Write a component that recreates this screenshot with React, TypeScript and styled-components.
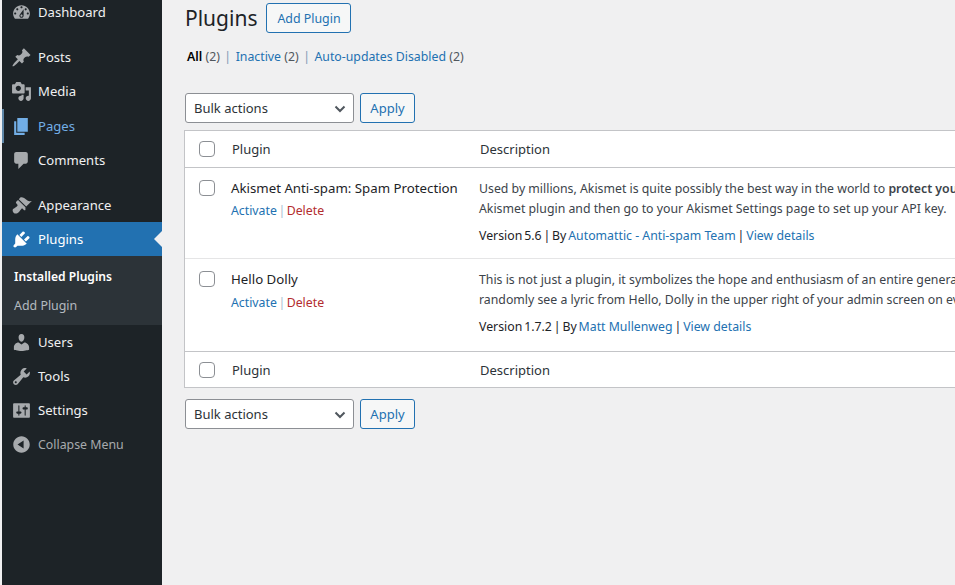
import React from "react";
import styled, { createGlobalStyle } from "styled-components";

const ICONS: Record<string, string> = {
  dashboard:
    "M3.76 16h12.48c1.1-1.37 1.76-3.11 1.76-5 0-4.42-3.58-8-8-8s-8 3.58-8 8c0 1.89.66 3.63 1.76 5zM10 4c.55 0 1 .45 1 1s-.45 1-1 1-1-.45-1-1 .45-1 1-1zM6 6c.55 0 1 .45 1 1s-.45 1-1 1-1-.45-1-1 .45-1 1-1zm8 0c.55 0 1 .45 1 1s-.45 1-1 1-1-.45-1-1 .45-1 1-1zm-5.37 5.55L12 7v6c0 1.1-.9 2-2 2s-2-.9-2-2c0-.57.24-1.08.63-1.45zM4 10c.55 0 1 .45 1 1s-.45 1-1 1-1-.45-1-1 .45-1 1-1zm12 0c.55 0 1 .45 1 1s-.45 1-1 1-1-.45-1-1 .45-1 1-1zm-5 3c0-.55-.45-1-1-1s-1 .45-1 1 .45 1 1 1 1-.45 1-1z",
  posts:
    "M10.44 3.02l1.82-1.82 6.36 6.35-1.83 1.82c-1.05-.68-2.48-.57-3.41.36l-.75.75c-.92.93-1.04 2.35-.35 3.41l-1.83 1.82-2.41-2.41-2.8 2.79c-.42.42-3.38 2.71-3.8 2.29s1.86-3.39 2.28-3.81l2.79-2.79L4.1 9.36l1.83-1.82c1.05.69 2.48.57 3.4-.36l.75-.75c.93-.92 1.05-2.35.36-3.41z",
  media:
    "M13 11V4c0-.55-.45-1-1-1h-1.67L9 1H5L3.67 3H2c-.55 0-1 .45-1 1v7c0 .55.45 1 1 1h10c.55 0 1-.45 1-1zM7 4.5c1.38 0 2.5 1.12 2.5 2.5S8.38 9.5 7 9.5 4.5 8.38 4.5 7 5.62 4.5 7 4.5zM14 6h5v10.5c0 1.38-1.12 2.5-2.5 2.5S14 17.88 14 16.5s1.12-2.5 2.5-2.5c.17 0 .34.02.5.05V9h-3V6zm-4 8.05V13h2v3.5c0 1.38-1.12 2.5-2.5 2.5S7 17.88 7 16.5 8.12 14 9.5 14c.17 0 .34.02.5.05z",
  pages: "M6 15V2h10v13H6zm-1 1h8v2H3V5h2v11z",
  comments:
    "M5 2h9c1.1 0 2 .9 2 2v7c0 1.1-.9 2-2 2h-2l-5 5v-5H5c-1.1 0-2-.9-2-2V4c0-1.1.9-2 2-2z",
  appearance:
    "M14.48 11.06L7.41 3.99l1.5-1.5c.5-.56 2.3-.47 3.51.32 1.21.8 1.43 1.28 2.91 2.1 1.18.64 2.45 1.26 4.45.85zm-.71.71L6.7 4.7 4.93 6.47c-.39.39-.39 1.02 0 1.41l1.06 1.06c.39.39.39 1.03 0 1.42-.6.6-1.43 1.11-2.21 1.69-.35.26-.7.53-1.01.84C1.43 13.25 1 15.35 2.44 16.79s3.54 1 4.89-.34c.31-.31.58-.66.84-1.01.58-.78 1.09-1.61 1.69-2.21.39-.39 1.03-.39 1.42 0l1.06 1.06c.39.39 1.02.39 1.41 0z",
  plugins:
    "M13.11 4.36L9.87 7.6 8 5.73l3.24-3.24c.35-.34 1.05-.2 1.56.32.52.51.66 1.21.31 1.55zm-8 1.77l.91-1.12 9.01 9.01-1.19.84c-.71.71-2.63 1.16-3.82 1.16H6.14L4.9 17.26c-.59.59-1.54.59-2.12 0-.59-.58-.59-1.53 0-2.12l1.24-1.24v-3.88c0-1.13.4-3.19 1.09-3.89zm7.26 3.97l3.24-3.24c.34-.35 1.04-.21 1.55.31.52.51.66 1.21.31 1.55l-3.24 3.25z",
  users:
    "M10 9.25c-2.27 0-2.73-3.44-2.73-3.44C7 4.02 7.82 2 9.97 2c2.16 0 2.98 2.02 2.71 3.81 0 0-.41 3.44-2.68 3.44zm0 2.57L12.72 10c2.39 0 4.52 2.33 4.52 4.53v2.49s-3.65 1.13-7.24 1.13c-3.65 0-7.24-1.13-7.24-1.13v-2.49c0-2.25 1.94-4.48 4.47-4.48z",
  tools:
    "M16.68 9.77c-1.34 1.34-3.3 1.67-4.95.99l-5.41 6.52c-.99.99-2.59.99-3.58 0s-.99-2.59 0-3.57l6.52-5.42c-.68-1.65-.35-3.61.99-4.95 1.28-1.28 3.12-1.62 4.72-1.06l-2.89 2.89 2.82 2.82 2.86-2.87c.53 1.58.18 3.39-1.08 4.65zM3.81 16.21c.4.39 1.04.39 1.43 0 .4-.4.4-1.04 0-1.43-.39-.4-1.03-.4-1.43 0-.39.39-.39 1.03 0 1.43z",
  settings:
    "M18 16V4c0-.55-.45-1-1-1H3c-.55 0-1 .45-1 1v12c0 .55.45 1 1 1h14c.55 0 1-.45 1-1zM8 11h1c.55 0 1 .45 1 1s-.45 1-1 1H8v1.5c0 .28-.22.5-.5.5s-.5-.22-.5-.5V13H6c-.55 0-1-.45-1-1s.45-1 1-1h1V5.5c0-.28.22-.5.5-.5s.5.22.5.5V11zm5-2h-1c-.55 0-1-.45-1-1s.45-1 1-1h1V5.5c0-.28.22-.5.5-.5s.5.22.5.5V7h1c.55 0 1 .45 1 1s-.45 1-1 1h-1v5.5c0 .28-.22.5-.5.5s-.5-.22-.5-.5V9z",
  collapse:
    "M10 2.16c4.33 0 7.84 3.51 7.84 7.84s-3.51 7.84-7.84 7.84S2.16 14.33 2.16 10 5.71 2.16 10 2.16zm2 11.72V6.12L6.18 9.97z"
};

const MENU = [
  { id: "dashboard", label: "Dashboard" },
  { id: "posts", label: "Posts", gap: true },
  { id: "media", label: "Media" },
  { id: "pages", label: "Pages", hover: true },
  { id: "comments", label: "Comments" },
  { id: "appearance", label: "Appearance", gap: true },
  { id: "plugins", label: "Plugins", current: true },
  { id: "users", label: "Users" },
  { id: "tools", label: "Tools" },
  { id: "settings", label: "Settings" },
  { id: "collapse", label: "Collapse Menu", muted: true }
];

const PLUGINS = [
  {
    name: "Akismet Anti-spam: Spam Protection",
    first: (
      <>
        Used by millions, Akismet is quite possibly the best way in the world to{" "}
        <strong>protect your blog from spam</strong>. Akismet Anti-spam keeps your
        site protected even while you sleep. To get started: activate the
      </>
    ),
    second:
      "Akismet plugin and then go to your Akismet Settings page to set up your API key.",
    version: "5.6",
    author: "Automattic - Anti-spam Team"
  },
  {
    name: "Hello Dolly",
    first:
      "This is not just a plugin, it symbolizes the hope and enthusiasm of an entire generation summed up in two words sung most famously by Louis Armstrong: Hello, Dolly. When activated you will",
    second:
      "randomly see a lyric from Hello, Dolly in the upper right of your admin screen on every page.",
    version: "1.7.2",
    author: "Matt Mullenweg"
  }
];

function MenuIcon({ id }: { id: string }) {
  return (
    <IconSlot viewBox="0 0 20 20" aria-hidden="true">
      <path d={ICONS[id]} />
    </IconSlot>
  );
}

function BulkBar() {
  return (
    <BulkRow>
      <SelectWrap>
        <BulkSelect defaultValue="">
          <option value="">Bulk actions</option>
          <option value="activate">Activate</option>
          <option value="delete">Delete</option>
        </BulkSelect>
        <Chevron viewBox="0 0 16 16" aria-hidden="true">
          <polyline points="3.5,5.5 8,10 12.5,5.5" />
        </Chevron>
      </SelectWrap>
      <ApplyButton type="button">Apply</ApplyButton>
    </BulkRow>
  );
}

function App() {
  return (
    <>
      <GlobalStyle />
      <Page>
        <Sidebar>
          {MENU.map(item => (
            <React.Fragment key={item.id}>
              <MenuItem
                $gap={item.gap}
                $hover={item.hover}
                $current={item.current}
                $muted={item.muted}
              >
                <MenuIcon id={item.id} />
                {item.label}
                {item.current && <CurrentArrow />}
              </MenuItem>
              {item.current && (
                <SubMenu>
                  <SubItem $active>Installed Plugins</SubItem>
                  <SubItem>Add Plugin</SubItem>
                </SubMenu>
              )}
            </React.Fragment>
          ))}
        </Sidebar>
        <Content>
          <TitleRow>
            <Title>Plugins</Title>
            <AddButton type="button">Add Plugin</AddButton>
          </TitleRow>
          <Filters>
            <FilterCurrent>All</FilterCurrent> <Count>(2)</Count>
            <Pipe>|</Pipe>
            <Link>Inactive</Link> <Count>(2)</Count>
            <Pipe>|</Pipe>
            <Link>Auto-updates Disabled</Link> <Count>(2)</Count>
          </Filters>
          <BulkBar />
          <PluginTable>
            <colgroup>
              <col width="37" />
              <col width="248" />
              <col />
            </colgroup>
            <thead>
              <tr>
                <CheckHead>
                  <Checkbox type="checkbox" />
                </CheckHead>
                <HeadCell>Plugin</HeadCell>
                <HeadCell>Description</HeadCell>
              </tr>
            </thead>
            <tbody>
              {PLUGINS.map(plugin => (
                <PluginRow key={plugin.name}>
                  <CheckCell>
                    <Checkbox type="checkbox" />
                  </CheckCell>
                  <NameCell>
                    <PluginName>{plugin.name}</PluginName>
                    <RowActions>
                      <Link>Activate</Link>
                      <ActionPipe>|</ActionPipe>
                      <DeleteLink>Delete</DeleteLink>
                    </RowActions>
                  </NameCell>
                  <DescCell>
                    <DescLine>{plugin.first}</DescLine>
                    <DescLine>{plugin.second}</DescLine>
                    <VersionLine>
                      Version {plugin.version} | By <Link>{plugin.author}</Link> |{" "}
                      <Link>View details</Link>
                    </VersionLine>
                  </DescCell>
                </PluginRow>
              ))}
            </tbody>
            <tfoot>
              <tr>
                <CheckFoot>
                  <Checkbox type="checkbox" />
                </CheckFoot>
                <FootCell>Plugin</FootCell>
                <FootCell>Description</FootCell>
              </tr>
            </tfoot>
          </PluginTable>
          <BulkBar />
        </Content>
      </Page>
    </>
  );
}

const GlobalStyle = createGlobalStyle`
  html, body {
    margin: 0;
    height: 100%;
    overflow: hidden;
    background: #f0f0f1;
  }
  body {
    font-family: "Noto Sans", "Open Sans", sans-serif;
    font-size: 13px;
    color: #3c434a;
  }
`;

const Page = styled.div`
  display: flex;
  width: 955px;
  height: 585px;
  overflow: hidden;
`;

const Sidebar = styled.nav`
  flex: none;
  width: 160px;
  margin-left: 2px;
  background: #1d2327;
  /* page is scrolled a few px, the first row is cut by the window top */
  & > :first-child {
    margin-top: -5px;
  }
`;

const MenuItem = styled.div<{
  $gap?: boolean;
  $hover?: boolean;
  $current?: boolean;
  $muted?: boolean;
}>`
  position: relative;
  display: flex;
  align-items: center;
  box-sizing: border-box;
  height: 34px;
  margin-top: ${p => (p.$gap ? "11px" : p.$hover ? "1px" : "0")};
  padding-left: ${p => (p.$hover ? "6.5px" : "8.5px")};
  border-left: ${p => (p.$hover ? "2px solid #5f87a8" : "none")};
  background: ${p => (p.$current ? "#2271b1" : "transparent")};
  color: ${p =>
    p.$hover
      ? "#72aee6"
      : p.$current
        ? "#fff"
        : p.$muted
          ? "#a7aaad"
          : "#f0f0f1"};
  fill: ${p =>
    p.$hover
      ? "#72aee6"
      : p.$current
        ? "#fff"
        : "#a7aaad"};
  font-size: ${p => (p.$muted ? "12.35px" : "13.1px")};
  white-space: nowrap;
`;

const IconSlot = styled.svg`
  flex: none;
  width: 21px;
  height: 21px;
  margin-right: 6.5px;
`;

const CurrentArrow = styled.span`
  position: absolute;
  right: 0;
  top: 50%;
  margin-top: -8px;
  border: 8px solid transparent;
  border-right-color: #f0f0f1;
  border-left-width: 0;
`;

const SubMenu = styled.div`
  padding: 6px 0 5px;
  background: #2c3338;
`;

const SubItem = styled.div<{ $active?: boolean }>`
  display: flex;
  align-items: center;
  height: 29px;
  padding-left: 12px;
  font-size: ${p => (p.$active ? "12.1px" : "12.4px")};
  font-weight: ${p => (p.$active ? 600 : 400)};
  color: ${p => (p.$active ? "#fff" : "rgba(240, 246, 252, 0.7)")};
`;

const Content = styled.main`
  flex: none;
  width: 793px;
  padding: 3px 0 0 23px;
  box-sizing: border-box;
`;

const TitleRow = styled.div`
  display: flex;
  align-items: center;
  gap: 9px;
  height: 30px;
`;

const Title = styled.h1`
  margin: 0;
  font-size: 21px;
  font-weight: 400;
  line-height: 30px;
  color: #1d2327;
`;

const OutlineButton = styled.button`
  box-sizing: border-box;
  height: 30px;
  padding: 0;
  border: 1px solid #2271b1;
  border-radius: 3px;
  background: #f6f7f7;
  color: #2271b1;
  font: inherit;
  font-size: 12.4px;
`;

const AddButton = styled(OutlineButton)`
  width: 85px;
`;

const ApplyButton = styled(OutlineButton)`
  width: 55px;
  font-size: 13px;
`;

const Filters = styled.div`
  margin: 14px 0 26px 2px;
  height: 20px;
  line-height: 20px;
  font-size: 12.3px;
  white-space: nowrap;
  color: #646970;
`;

const FilterCurrent = styled.span`
  font-weight: 600;
  color: #000;
`;

const Count = styled.span`
  color: #50575e;
`;

const Pipe = styled.span`
  margin: 0 4.5px;
  color: #7e9ab5;
`;

const Link = styled.a`
  color: #2271b1;
`;

const BulkRow = styled.div`
  display: flex;
  gap: 6px;
  height: 30px;
`;

const SelectWrap = styled.div`
  position: relative;
  width: 169px;
`;

const BulkSelect = styled.select`
  box-sizing: border-box;
  width: 100%;
  height: 30px;
  padding: 0 24px 0 8px;
  appearance: none;
  border: 1px solid #8c8f94;
  border-radius: 3px;
  background: #fff;
  color: #2c3338;
  font: inherit;
  font-size: 13px;
`;

const Chevron = styled.svg`
  position: absolute;
  right: 6px;
  top: 8px;
  width: 16px;
  height: 16px;
  fill: none;
  stroke: #50575e;
  stroke-width: 2;
  pointer-events: none;
`;

const PluginTable = styled.table`
  box-sizing: border-box;
  width: 1100px;
  margin: 7px 0 11px -1px;
  table-layout: fixed;
  border-collapse: separate;
  border-spacing: 0;
  border: 1px solid #c3c4c7;
  background: #fff;
`;

const Checkbox = styled.input`
  display: block;
  box-sizing: border-box;
  width: 16px;
  height: 16px;
  margin: 0;
  appearance: none;
  border: 1px solid #8c8f94;
  border-radius: 4px;
  background: #fff;
`;

const HeadCell = styled.th`
  height: 37px;
  padding: 0 0 0 10px;
  border-bottom: 1px solid #c3c4c7;
  box-sizing: border-box;
  font-weight: 400;
  font-size: 13px;
  text-align: left;
  color: #2c3338;
`;

const CheckHead = styled(HeadCell)`
  padding-left: 14px;
`;

const FootCell = styled(HeadCell)`
  height: 36px;
  border-bottom: none;
  border-top: 1px solid #c3c4c7;
`;

const CheckFoot = styled(FootCell)`
  padding-left: 14px;
`;

const BodyCell = styled.td`
  height: 90px;
  vertical-align: top;
  box-sizing: border-box;
`;

const CheckCell = styled(BodyCell)`
  padding: 12px 0 0 14px;
`;

const NameCell = styled(BodyCell)`
  padding: 10px 0 0 9px;
`;

const PluginName = styled.div`
  height: 20px;
  line-height: 20px;
  font-size: 13.25px;
  color: #1d2327;
  white-space: nowrap;
`;

const RowActions = styled.div`
  margin-top: 3px;
  line-height: 20px;
  font-size: 12.3px;
  white-space: nowrap;
`;

const ActionPipe = styled.span`
  margin: 0 1.5px;
  color: #a7bcd0;
`;

const DeleteLink = styled.a`
  color: #b32d2e;
`;

const DescCell = styled(BodyCell)`
  padding: 11px 0 0 9px;
  font-size: 12.3px;
  & strong {
    font-weight: 600;
  }
`;

const DescLine = styled.div`
  line-height: 20px;
  white-space: nowrap;
`;

const VersionLine = styled.div`
  margin-top: 7px;
  line-height: 20px;
  color: #1d2327;
  white-space: nowrap;
  word-spacing: -1.3px;
  & a {
    word-spacing: 0;
  }
`;

const PluginRow = styled.tr`
  & + & td {
    height: 93px;
    border-top: 1px solid #e5e5e6;
  }
  & + & ${RowActions} {
    margin-top: 4px;
  }
`;

export default App;
